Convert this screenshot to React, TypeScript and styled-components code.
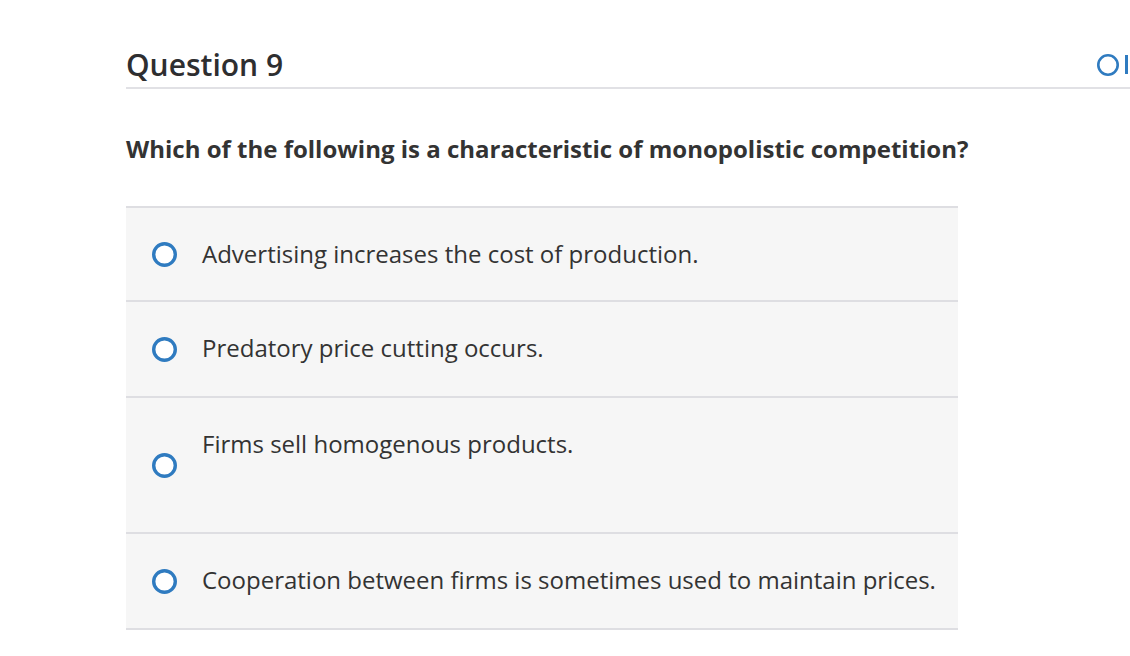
import React from 'react';
import styled, { createGlobalStyle } from 'styled-components';

const GlobalStyle = createGlobalStyle`
    html, body {
        margin: 0;
        padding: 0;
        background: #ffffff;
        overflow: hidden;
    }
    body {
        font-family: "Open Sans", Lato, Arial, sans-serif;
        color: #333333;
        font-variant-ligatures: none;
    }
`;

const Page = styled.div`
    padding: 42px 0 0 126px;
    width: 1130px;
    box-sizing: border-box;
`;

const Header = styled.div`
    display: flex;
    align-items: center;
    justify-content: space-between;
    height: 45px;
    border-bottom: 2px solid #e1e1e5;
`;

const Title = styled.h2`
    margin: 0;
    font-size: 30px;
    line-height: 40px;
    font-weight: 600;
    color: #2e2e30;
`;

const Tools = styled.div`
    display: flex;
    align-items: center;
    gap: 6px;
    width: 33px;
    overflow: hidden;
    flex-shrink: 0;
`;

const ToolBar = styled.span`
    display: block;
    width: 3px;
    height: 19px;
    background: #2f7bc0;
    flex-shrink: 0;
`;

const Prompt = styled.p`
    margin: 45px 0 0 0;
    font-size: 24px;
    font-weight: 700;
    color: #333333;
    line-height: 30px;
`;

const Options = styled.div`
    margin-top: 42px;
    width: 832px;
    border-top: 2px solid #dedee2;
`;

const Row = styled.label`
    display: flex;
    align-items: center;
    gap: 25px;
    padding: 33px 26px 32px;
    min-height: 26px;
    background: #f6f6f6;
    border-bottom: 2px solid #dedee2;
    cursor: pointer;
`;

const Label = styled.div<{ $extra?: number }>`
    font-size: 24px;
    line-height: 26px;
    color: #333333;
    white-space: nowrap;
    padding-bottom: ${p => p.$extra ?? 0}px;
`;

function Radio({ size = 25, stroke = 3.4 }: { size?: number; stroke?: number }) {
    const r = (size - stroke) / 2;
    return (
        <svg width={size} height={size} viewBox={`0 0 ${size} ${size}`} style={{ flexShrink: 0 }}>
            <circle cx={size / 2} cy={size / 2} r={r} fill="#ffffff" stroke="#2f7bc0" strokeWidth={stroke} />
        </svg>
    );
}

const answers = [
    { text: 'Advertising increases the cost of production.', extra: 1 },
    { text: 'Predatory price cutting occurs.', extra: 3 },
    { text: 'Firms sell homogenous products.', extra: 43 },
    { text: 'Cooperation between firms is sometimes used to maintain prices.', extra: 3 },
];

export default function App() {
    return (
        <>
            <GlobalStyle />
            <Page>
                <Header>
                    <Title>Question 9</Title>
                    <Tools>
                        <Radio size={22} stroke={2.6} />
                        <ToolBar />
                    </Tools>
                </Header>
                <Prompt>Which of the following is a characteristic of monopolistic competition?</Prompt>
                <Options>
                    {answers.map(a => (
                        <Row key={a.text}>
                            <Radio />
                            <Label $extra={a.extra}>{a.text}</Label>
                        </Row>
                    ))}
                </Options>
            </Page>
        </>
    );
}
